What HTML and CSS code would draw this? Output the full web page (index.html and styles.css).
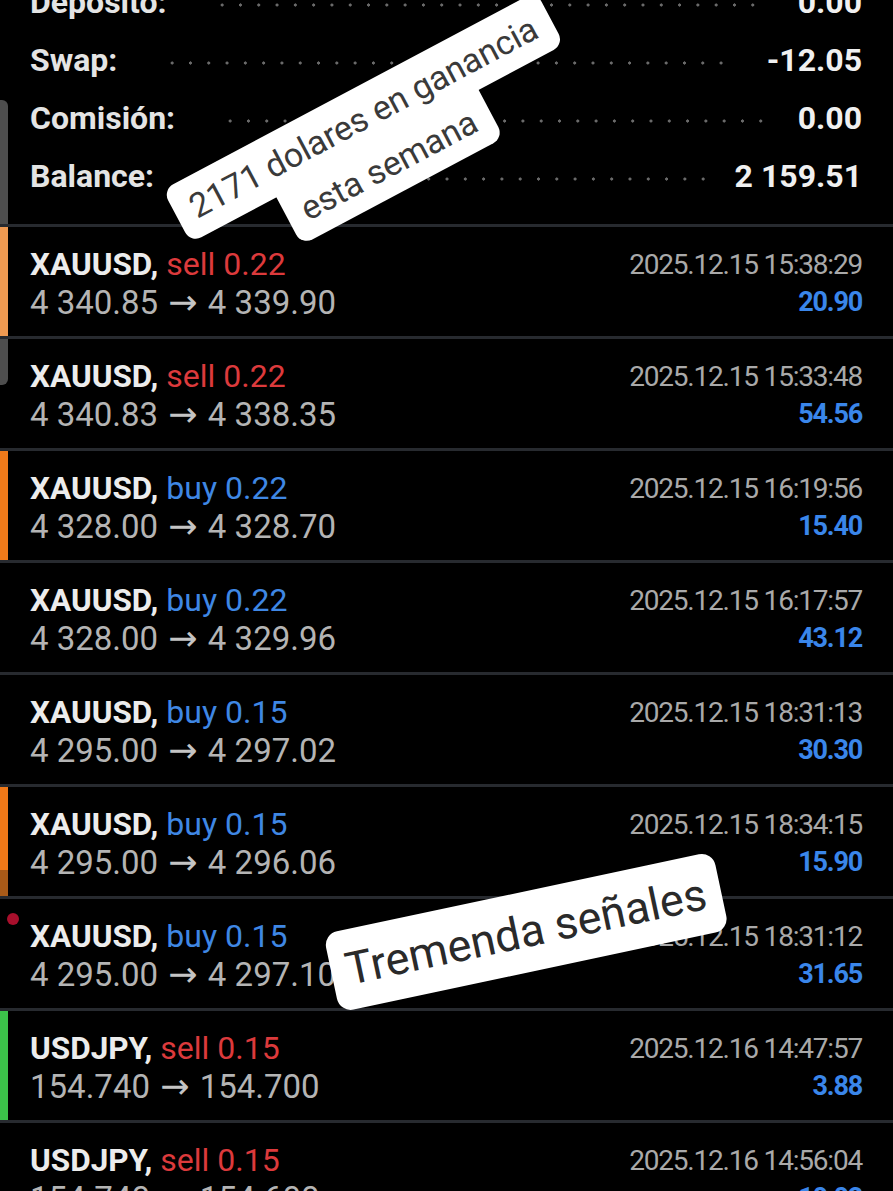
FILE: index.html
```html
<!DOCTYPE html>
<html lang="es">
<head>
<meta charset="UTF-8">
<meta name="viewport" content="width=device-width, initial-scale=1.0">
<title>Historial</title>
<link rel="stylesheet" href="styles.css">
</head>
<body>
<div class="screen">
  <div class="summary">
    <div class="sum-row"><span class="sum-label">Depósito:</span><span class="dots"></span><span class="sum-value">0.00</span></div>
    <div class="sum-row"><span class="sum-label">Swap:</span><span class="dots"></span><span class="sum-value">-12.05</span></div>
    <div class="sum-row"><span class="sum-label">Comisión:</span><span class="dots"></span><span class="sum-value">0.00</span></div>
    <div class="sum-row"><span class="sum-label">Balance:</span><span class="dots"></span><span class="sum-value">2 159.51</span></div>
  </div>

  <div class="trades">
    <div class="trade bar-peach">
      <div class="trade-top"><span class="sym">XAUUSD,</span><span class="sell">sell 0.22</span><span class="time">2025.12.15 15:38:29</span></div>
      <div class="trade-bottom"><span class="prices">4 340.85 <span class="arrow">→</span> 4 339.90</span><span class="profit">20.90</span></div>
    </div>
    <div class="trade">
      <div class="trade-top"><span class="sym">XAUUSD,</span><span class="sell">sell 0.22</span><span class="time">2025.12.15 15:33:48</span></div>
      <div class="trade-bottom"><span class="prices">4 340.83 <span class="arrow">→</span> 4 338.35</span><span class="profit">54.56</span></div>
    </div>
    <div class="trade bar-orange">
      <div class="trade-top"><span class="sym">XAUUSD,</span><span class="buy">buy 0.22</span><span class="time">2025.12.15 16:19:56</span></div>
      <div class="trade-bottom"><span class="prices">4 328.00 <span class="arrow">→</span> 4 328.70</span><span class="profit">15.40</span></div>
    </div>
    <div class="trade">
      <div class="trade-top"><span class="sym">XAUUSD,</span><span class="buy">buy 0.22</span><span class="time">2025.12.15 16:17:57</span></div>
      <div class="trade-bottom"><span class="prices">4 328.00 <span class="arrow">→</span> 4 329.96</span><span class="profit">43.12</span></div>
    </div>
    <div class="trade">
      <div class="trade-top"><span class="sym">XAUUSD,</span><span class="buy">buy 0.15</span><span class="time">2025.12.15 18:31:13</span></div>
      <div class="trade-bottom"><span class="prices">4 295.00 <span class="arrow">→</span> 4 297.02</span><span class="profit">30.30</span></div>
    </div>
    <div class="trade bar-orange-fade">
      <div class="trade-top"><span class="sym">XAUUSD,</span><span class="buy">buy 0.15</span><span class="time">2025.12.15 18:34:15</span></div>
      <div class="trade-bottom"><span class="prices">4 295.00 <span class="arrow">→</span> 4 296.06</span><span class="profit">15.90</span></div>
    </div>
    <div class="trade">
      <span class="rec-dot"></span>
      <div class="trade-top"><span class="sym">XAUUSD,</span><span class="buy">buy 0.15</span><span class="time">2025.12.15 18:31:12</span></div>
      <div class="trade-bottom"><span class="prices">4 295.00 <span class="arrow">→</span> 4 297.10</span><span class="profit">31.65</span></div>
    </div>
    <div class="trade bar-green">
      <div class="trade-top"><span class="sym">USDJPY,</span><span class="sell">sell 0.15</span><span class="time">2025.12.16 14:47:57</span></div>
      <div class="trade-bottom"><span class="prices">154.740 <span class="arrow">→</span> 154.700</span><span class="profit">3.88</span></div>
    </div>
    <div class="trade">
      <div class="trade-top"><span class="sym">USDJPY,</span><span class="sell">sell 0.15</span><span class="time">2025.12.16 14:56:04</span></div>
      <div class="trade-bottom"><span class="prices">154.740 <span class="arrow">→</span> 154.600</span><span class="profit">10.02</span></div>
    </div>
  </div>

  <div class="scroll-thumb"></div>

  <div class="sticker sticker-week">
    <span class="sticker-line">2171 dolares en ganancia</span>
    <span class="sticker-line">esta semana</span>
  </div>
  <div class="sticker sticker-signals">
    <span class="sticker-line">Tremenda señales</span>
  </div>
</div>
</body>
</html>
```

FILE: styles.css
```css
body {
  margin: 0;
  padding: 0;
  background-color: #000;
  font-family: Roboto, "Noto Sans", sans-serif;
  overflow: hidden;
}
.screen {
  position: relative;
  width: 893px;
  height: 1191px;
  overflow: hidden;
}

/* summary block */
.summary {
  margin-top: -27px;
  padding: 0 31px 19px 30px;
}
.sum-row {
  display: flex;
  align-items: center;
  height: 58px;
  font-size: 32px;
  font-weight: bold;
  color: #e4e4e4;
}
.dots {
  flex: 1;
  height: 6px;
  margin: 6px 30px 0 46px;
  background-image: radial-gradient(circle, #6a6a6a 1.4px, transparent 1.8px);
  background-size: 18.3px 6px;
  background-repeat: repeat-x;
}
.sum-value {
  color: #f0f0f0;
}

/* trade list */
.trade {
  position: relative;
  z-index: 1;
  height: 90px;
  border-top: 3px solid #272a2f;
  padding: 19px 31px 0 30px;
  background-repeat: no-repeat;
  background-position: left top;
  background-size: 8px 100%;
}
.trade-top,
.trade-bottom {
  display: flex;
  align-items: center;
}
.trade-top {
  height: 36px;
}
.trade-bottom {
  height: 40px;
}
.sym {
  font-size: 31.5px;
  font-weight: bold;
  color: #ececec;
  margin-right: 8px;
}
.sell,
.buy {
  font-size: 32px;
}
.sell {
  color: #dc3a3c;
}
.buy {
  color: #3f87e4;
}
.time {
  margin-left: auto;
  font-size: 28px;
  letter-spacing: -1.2px;
  color: #a9a9a9;
}
.prices {
  font-size: 33px;
  color: #b4b4b4;
}
.arrow {
  font-family: "DejaVu Sans", sans-serif;
  font-size: 35px;
  margin: 0 2px;
  color: #c4c4c4;
}
.profit {
  margin-left: auto;
  font-size: 27px;
  font-weight: bold;
  letter-spacing: -1.2px;
  color: #3a86ea;
}

.bar-peach {
  background-image: linear-gradient(#ef9a52, #ef9a52);
}
.bar-orange {
  background-image: linear-gradient(#f07a1a, #f07a1a);
}
.bar-orange-fade {
  background-image: linear-gradient(#f07818 0%, #f07818 76%, #a85a18 76%, #a85a18 100%);
}
.bar-green {
  background-image: linear-gradient(#3cc24a, #3cc24a);
}

.rec-dot {
  position: absolute;
  left: 7px;
  top: 14px;
  width: 12px;
  height: 12px;
  border-radius: 50%;
  background-color: #a80f2c;
}

.scroll-thumb {
  position: absolute;
  left: 0;
  top: 100px;
  width: 8px;
  height: 285px;
  border-radius: 0 6px 6px 0;
  background-color: #4e4e4e;
  z-index: 0;
}

/* story stickers */
.sticker {
  position: absolute;
  z-index: 5;
  display: flex;
  flex-direction: column;
  align-items: center;
}
.sticker-line {
  background-color: #fff;
  color: #3a3a3a;
  border-radius: 12px;
  white-space: nowrap;
}
.sticker-week {
  left: 376px;
  top: 141px;
  transform: translate(-50%, -50%) rotate(-28deg);
}
.sticker-week .sticker-line {
  font-size: 34px;
  line-height: 44px;
  padding: 8px 17px;
}
.sticker-week .sticker-line + .sticker-line {
  margin-top: -6px;
  border-radius: 0 0 12px 12px;
}
.sticker-signals {
  left: 526px;
  top: 932px;
  transform: translate(-50%, -50%) rotate(-12deg);
}
.sticker-signals .sticker-line {
  font-size: 45px;
  line-height: 52px;
  padding: 14px 15px;
  color: #2a2a2a;
  border-radius: 14px;
}
```
